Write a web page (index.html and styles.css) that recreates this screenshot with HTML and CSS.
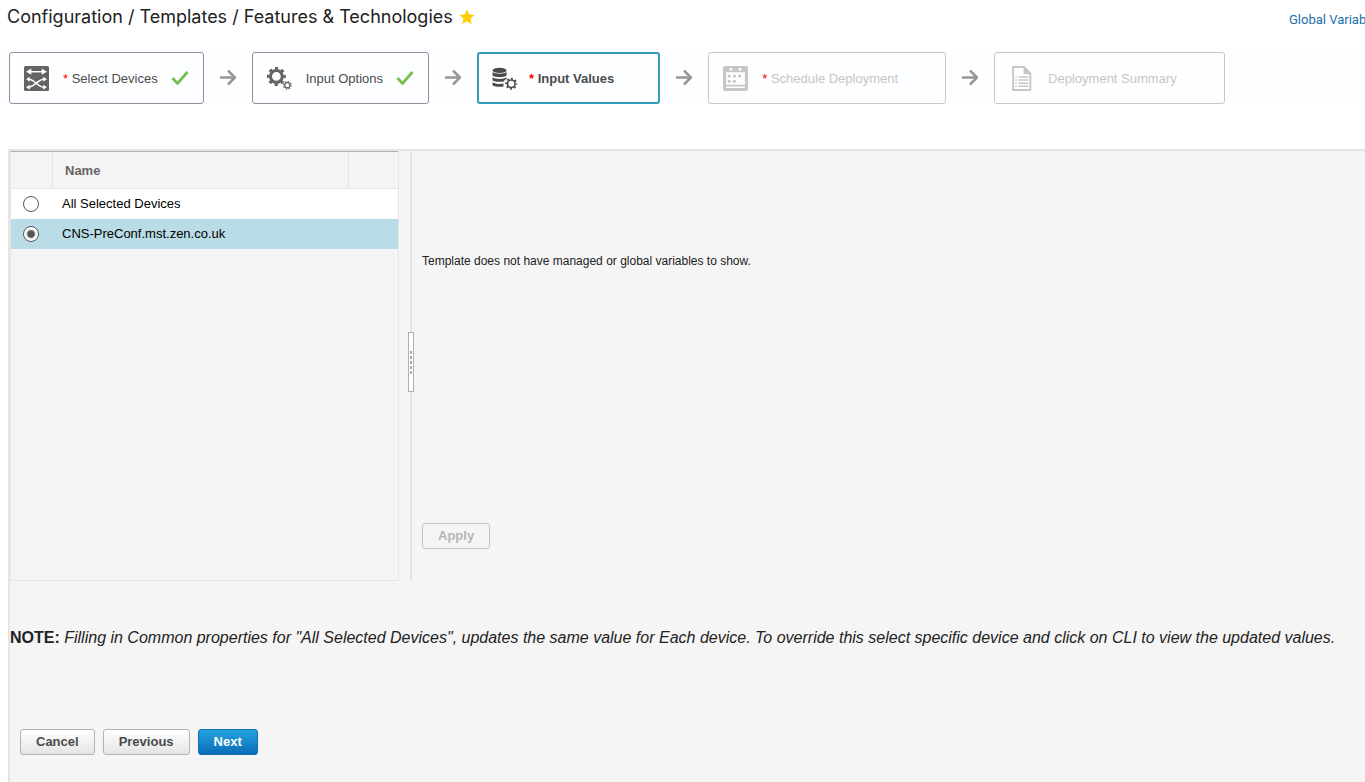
FILE: index.html
```html
<!DOCTYPE html>
<html lang="en">
<head>
<meta charset="utf-8">
<title>Configuration / Templates / Features &amp; Technologies</title>
<link rel="stylesheet" href="styles.css">
</head>
<body>
<header class="topbar">
  <h1 class="title">Configuration / Templates / Features &amp; Technologies</h1>
  <button class="star" type="button" aria-label="Favorite">
    <svg width="16" height="16" viewBox="0 0 16 16"><path fill="#fc0" d="M8 .5l2.200 5 5.300.5-4 3.600 1.200 5.300L8 12.200l-4.700 2.700 1.200-5.300-4-3.600 5.300-.5z"/></svg>
  </button>
  <a class="global-link" href="#">Global Variables</a>
</header>

<nav class="steps" aria-label="Wizard steps">
  <a class="step" href="#">
    <svg class="step-icon" viewBox="0 0 24 24">
      <rect width="24" height="24" rx="1.500" fill="#636466"/>
      <g fill="none" stroke="#fff" stroke-width="1.400">
        <path d="M5 5.500h14"/>
        <path d="M4 12.500c6 0 9 8 16 8M4 20.500c6 0 9-8 16-8"/>
      </g>
      <path fill="#fff" d="M2 5.500l5-3v6zM22 5.500l-5-3v6zM2 12.700l3.500-2.400v4.800zM2 20.300l3.500-2.400v4.800zM22 12.700l-3.500-2.400v4.800zM22 20.300l-3.500-2.400v4.800z"/>
    </svg>
    <span class="step-label"><span class="req">*</span> Select Devices</span>
    <svg class="check" viewBox="0 0 18 14"><path d="M1.500 7l5 5.500L16.500 1" fill="none" stroke="#74bf4b" stroke-width="2.700"/></svg>
  </a>
  <svg class="arrow" viewBox="0 0 16 16"><path d="M0 7.500h14.500M8 .5l7 7-7 7" fill="none" stroke="#979797" stroke-width="2.600"/></svg>
  <a class="step" href="#">
    <svg class="step-icon" viewBox="0 0 24 24">
      <circle cx="9" cy="10" r="5.700" fill="none" stroke="#636466" stroke-width="3"/>
      <circle cx="9" cy="10" r="7.800" fill="none" stroke="#636466" stroke-width="2.600" stroke-dasharray="3.060 3.060" stroke-dashoffset="1.530"/>
      <circle cx="19.500" cy="18.500" r="2.500" fill="none" stroke="#636466" stroke-width="1.200"/>
      <circle cx="19.500" cy="18.500" r="3.600" fill="none" stroke="#636466" stroke-width="1.200" stroke-dasharray="1.410 1.410"/>
    </svg>
    <span class="step-label">Input Options</span>
    <svg class="check" viewBox="0 0 18 14"><path d="M1.500 7l5 5.500L16.500 1" fill="none" stroke="#74bf4b" stroke-width="2.700"/></svg>
  </a>
  <svg class="arrow" viewBox="0 0 16 16"><path d="M0 7.500h14.500M8 .5l7 7-7 7" fill="none" stroke="#979797" stroke-width="2.600"/></svg>
  <a class="step step-current" href="#" aria-current="step">
    <svg class="step-icon" viewBox="0 0 24 24">
      <g fill="#4a4b4d">
        <path d="M.5 5.800c2.500 2.200 11 2.200 13.500 0v3.400c-2.500 2.200-11 2.200-13.500 0z"/>
        <ellipse cx="7.250" cy="4.200" rx="6.750" ry="2.600"/>
        <path d="M.5 10.800c2.500 2.200 11 2.200 13.500 0v1.700c-1.500.7-2.200 1.200-2.700 2.300-4 .7-9 .4-10.800-.9z"/>
        <path d="M.5 15.500c2.300 1.600 6.800 2 10.500 1.400v2.700c-3.700.6-8.500.3-10.500-1z"/>
      </g>
      <circle cx="18.500" cy="17" r="3.600" fill="none" stroke="#4a4b4d" stroke-width="1.500"/>
      <circle cx="18.500" cy="17" r="4.900" fill="none" stroke="#4a4b4d" stroke-width="1.700" stroke-dasharray="1.924 1.924" stroke-dashoffset=".96"/>
    </svg>
    <span class="step-label"><span class="req">*</span> Input Values</span>
    <span class="check"></span>
  </a>
  <svg class="arrow" viewBox="0 0 16 16"><path d="M0 7.500h14.500M8 .5l7 7-7 7" fill="none" stroke="#979797" stroke-width="2.600"/></svg>
  <a class="step step-future" href="#">
    <svg class="step-icon" viewBox="0 0 24 24">
      <path fill="#c6c6c6" fill-rule="evenodd" d="M2 0h20a2 2 0 0 1 2 2v20a2 2 0 0 1-2 2H2a2 2 0 0 1-2-2V2a2 2 0 0 1 2-2zM3 6v12h18V6zM3 19.700v1.500h18v-1.500z"/>
      <g fill="#fff"><circle cx="7.500" cy="3.200" r="1.400"/><circle cx="16.500" cy="3.200" r="1.400"/></g>
      <g fill="#c6c6c6"><circle cx="6" cy="9.700" r="1.500"/><circle cx="11" cy="9.700" r="1.500"/><circle cx="16" cy="9.700" r="1.500"/><circle cx="6" cy="14.700" r="1.500"/><circle cx="11" cy="14.700" r="1.500"/></g>
    </svg>
    <span class="step-label"><span class="req">*</span> Schedule Deployment</span>
    <span class="check"></span>
  </a>
  <svg class="arrow" viewBox="0 0 16 16"><path d="M0 7.500h14.500M8 .5l7 7-7 7" fill="none" stroke="#979797" stroke-width="2.600"/></svg>
  <a class="step step-future" href="#">
    <svg class="step-icon" viewBox="0 0 24 24">
      <path d="M4 1h10.500l6 6v16H4z" fill="#fff" stroke="#c6c6c6" stroke-width="1.800"/>
      <path d="M14 1l7.300 7H14z" fill="#c6c6c6"/>
      <path d="M9 10.500h9.500M9 13.500h9.500M9 16.500h9.500M9 19.500h9.500" stroke="#c6c6c6" stroke-width="1.500"/>
      <path d="M6 10.500h1.500M6 13.500h1.500M6 16.500h1.500M6 19.500h1.500" stroke="#c6c6c6" stroke-width="1.300"/>
    </svg>
    <span class="step-label">Deployment Summary</span>
    <span class="check"></span>
  </a>
</nav>

<main class="content">
  <div class="split">
    <section class="devices">
      <table class="device-table">
        <colgroup><col class="col-radio"><col><col class="col-end"></colgroup>
        <thead><tr><th></th><th>Name</th><th></th></tr></thead>
        <tbody>
          <tr>
            <td><input type="radio" class="radio" name="device" id="device-all"></td>
            <td colspan="2"><label for="device-all">All Selected Devices</label></td>
          </tr>
          <tr class="selected">
            <td><input type="radio" class="radio" name="device" id="device-cns" checked></td>
            <td colspan="2"><label for="device-cns">CNS-PreConf.mst.zen.co.uk</label></td>
          </tr>
        </tbody>
      </table>
    </section>
    <div class="splitter">
      <div class="handle"><i></i><i></i><i></i><i></i><i></i></div>
    </div>
    <section class="values">
      <p class="message">Template does not have managed or global variables to show.</p>
      <button class="btn" type="button" disabled>Apply</button>
    </section>
  </div>
  <p class="note"><strong>NOTE:</strong> <em>Filling in Common properties for "All Selected Devices", updates the same value for Each device. To override this select specific device and click on CLI to view the updated values.</em></p>
  <div class="actions">
    <button class="btn" type="button">Cancel</button>
    <button class="btn" type="button">Previous</button>
    <button class="btn btn-primary" type="button">Next</button>
  </div>
</main>
</body>
</html>
```
FILE: styles.css
```css
* {
  box-sizing: border-box;
}

body {
  margin: 0;
  min-height: 100vh;
  display: flex;
  flex-direction: column;
  background: #fff;
  color: #222;
  font: 13px/16px "Liberation Sans", Arial, sans-serif;
}

.topbar {
  display: flex;
  align-items: center;
  height: 34px;
  margin-bottom: 15px;
  padding-left: 7px;
}

.title {
  margin: 0;
  font: 400 18px/24px Inter, sans-serif;
  white-space: nowrap;
}

.star {
  display: flex;
  margin-left: 6px;
  padding: 0;
  border: 0;
  background: none;
}

.global-link {
  width: 76px;
  margin-left: auto;
  padding-top: 5px;
  overflow: hidden;
  white-space: nowrap;
  color: #2070ae;
  font-family: Roboto, sans-serif;
  text-decoration: none;
}

.steps {
  display: flex;
  align-items: center;
  padding: 3px 9px 1px;
  margin-bottom: 44px;
  background: #fdfeff;
}

.step {
  display: flex;
  align-items: center;
  height: 52px;
  padding: 0 14px;
  border: 1px solid #8f9298;
  border-radius: 3px;
  color: #4a4b4d;
  text-decoration: none;
  white-space: nowrap;
}

.step-icon {
  width: 25px;
  height: 25px;
  margin-right: 14px;
  overflow: visible;
}

.step-label {
  padding-top: 2px;
}

.check {
  width: 18px;
  height: 14px;
  margin-left: 13px;
}

.arrow {
  width: 16px;
  height: 16px;
  margin: 0 16px;
}

.req {
  color: #f00;
}

.step-current {
  padding: 0 13px;
  border: 2px solid #3399bf;
  font-weight: bold;
}

.step-current .step-icon {
  margin-right: 12px;
}

.step-future {
  padding-right: 16px;
  border-color: #c6c7ca;
  color: #c6c6c6;
}

.content {
  flex: 1;
  margin-left: 8px;
  border-top: 2px solid #e5e5e5;
  border-left: 2px solid #e5e5e5;
  background: #f5f5f5;
}

.split {
  display: flex;
  height: 430px;
}

.devices {
  flex: 0 0 389px;
  border: solid #e5e5e5;
  border-width: 0 1px 1px;
  background: #f4f4f4;
}

.device-table {
  width: 100%;
  table-layout: fixed;
  border-spacing: 0;
  color: #000;
}

.col-radio {
  width: 42px;
}

.col-end {
  width: 49px;
}

.device-table th {
  height: 38px;
  padding: 2px 12px 0;
  border-top: 1px solid #b0b0b0;
  border-right: 1px solid #e5e5e5;
  border-bottom: 1px solid #e5e5e5;
  color: #666;
  text-align: left;
}

.device-table th:last-child {
  border-right: 0;
}

.device-table td {
  height: 30px;
  padding: 0 9px;
  background: #fff;
}

.device-table td:first-child {
  padding: 0 12px;
}

.device-table .selected td {
  background: #b9dce6;
}

.radio {
  display: block;
  width: 16px;
  height: 16px;
  margin: 0;
  appearance: none;
  border: 1px solid #555;
  border-radius: 50%;
  background: #fff;
}

.radio:checked {
  background: radial-gradient(circle, #555 3px, #fff 5px);
}

.splitter {
  display: flex;
  align-items: center;
  justify-content: center;
  width: 2px;
  margin: 0 10px 0 11px;
  padding-bottom: 8px;
  background: #e5e5e5;
}

.handle {
  display: flex;
  flex: 0 0 6px;
  flex-direction: column;
  align-items: center;
  justify-content: center;
  gap: 2px;
  height: 60px;
  margin: 0 -2px;
  border: 1px solid #b0b0b0;
  background: #fff;
}

.handle i {
  width: 2px;
  height: 3px;
  background: #aaa;
}

.values {
  flex: 1;
  padding-top: 102px;
}

.message {
  height: 270px;
  margin: 0;
  font-size: 12px;
}

.btn {
  height: 26px;
  padding: 0 15px;
  border: 1px solid #b3b3b3;
  border-radius: 3px;
  background: linear-gradient(#fff, #e4e4e4);
  color: #4a4b4d;
  font: bold 13px/16px "Liberation Sans", Arial, sans-serif;
}

.btn:disabled {
  border-color: #c4c4c4;
  background: #f5f5f5;
  color: #b6b6b6;
}

.btn-primary {
  border-color: #0c70b4;
  background: linear-gradient(#26a3de, #0a6db8);
  color: #fff;
}

.note {
  margin: 46px 0 80px;
  font-size: 16px;
  line-height: 22px;
}

.actions {
  display: flex;
  gap: 8px;
  padding: 0 10px 27px;
}
```
